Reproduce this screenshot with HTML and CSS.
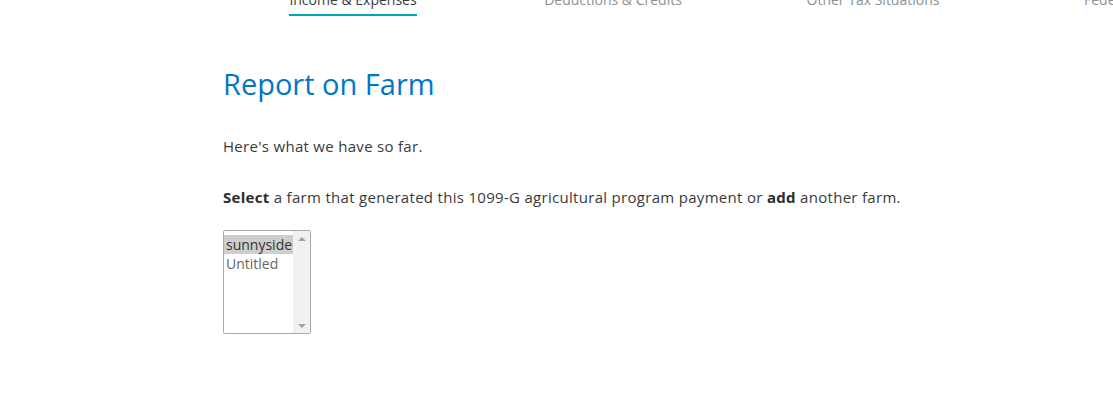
FILE: index.html
```html
<!DOCTYPE html>
<html lang="en">
<head>
  <meta charset="UTF-8">
  <title>Report on Farm</title>
  <link rel="stylesheet" href="styles.css">
</head>
<body>
<nav class="steps">
  <div class="step active"><span>Income &amp; Expenses</span></div>
  <div class="step"><span>Deductions &amp; Credits</span></div>
  <div class="step"><span>Other Tax Situations</span></div>
  <div class="step"><span>Federal Review</span></div>
</nav>

<main class="page">
  <h1>Report on Farm</h1>
  <p class="intro">Here's what we have so far.</p>
  <p class="prompt"><b>Select</b> a farm that generated this 1099-G agricultural program payment or <b>add</b> another farm.</p>

  <div class="listbox">
    <div class="options">
      <div class="option selected">sunnyside</div>
      <div class="option">Untitled</div>
    </div>
    <div class="scrollbar">
      <span class="arrow up"></span>
      <span class="arrow down"></span>
    </div>
  </div>
</main>
</body>
</html>
```

FILE: styles.css
```css
* { box-sizing: border-box; }
body {
  margin: 0;
  background: #fff;
  font-family: "Open Sans", "Noto Sans", sans-serif;
  color: #393a3d;
}

.steps {
  display: flex;
  padding-left: 223px;
  margin-top: -10px;
  height: 26px;
  white-space: nowrap;
  overflow: hidden;
}

.step {
  width: 260px;
  flex: none;
  text-align: center;
  font-size: 14px;
  line-height: 20px;
  color: #8d9096;
}

.step span {
  display: inline-block;
  padding-bottom: 4px;
  border-bottom: 2px solid transparent;
}

.step.active span {
  color: #393a3d;
  border-bottom-color: #00a6b8;
}

.page {
  padding: 48px 0 0 223px;
}

h1 {
  margin: 0;
  font-size: 29px;
  font-weight: 400;
  color: #0077c5;
  line-height: 40px;
}

.intro,
.prompt {
  font-size: 15px;
  letter-spacing: 0.3px;
  line-height: 20px;
}

.intro {
  margin: 32px 0 0;
}

.prompt {
  margin: 31px 0 0;
}

.prompt b {
  font-weight: 700;
  color: #2b2c2e;
}

.listbox {
  margin-top: 23px;
  width: 88px;
  height: 104px;
  border: 1px solid #a9a9a9;
  border-radius: 2px;
  display: flex;
}

.options {
  flex: 1;
  padding-top: 4px;
}

.option {
  font-size: 14px;
  line-height: 19px;
  padding-left: 2px;
  color: #666;
}

.option.selected {
  background: #cecece;
  color: #333;
}

.scrollbar {
  width: 17px;
  background: #f1f1f1;
  display: flex;
  flex-direction: column;
  justify-content: space-between;
  align-items: center;
  padding: 6px 0 5px;
}

.arrow {
  width: 0;
  height: 0;
  border-left: 4px solid transparent;
  border-right: 4px solid transparent;
}

.arrow.up { border-bottom: 4px solid #a3a3a3; }
.arrow.down { border-top: 4px solid #a3a3a3; }
```
